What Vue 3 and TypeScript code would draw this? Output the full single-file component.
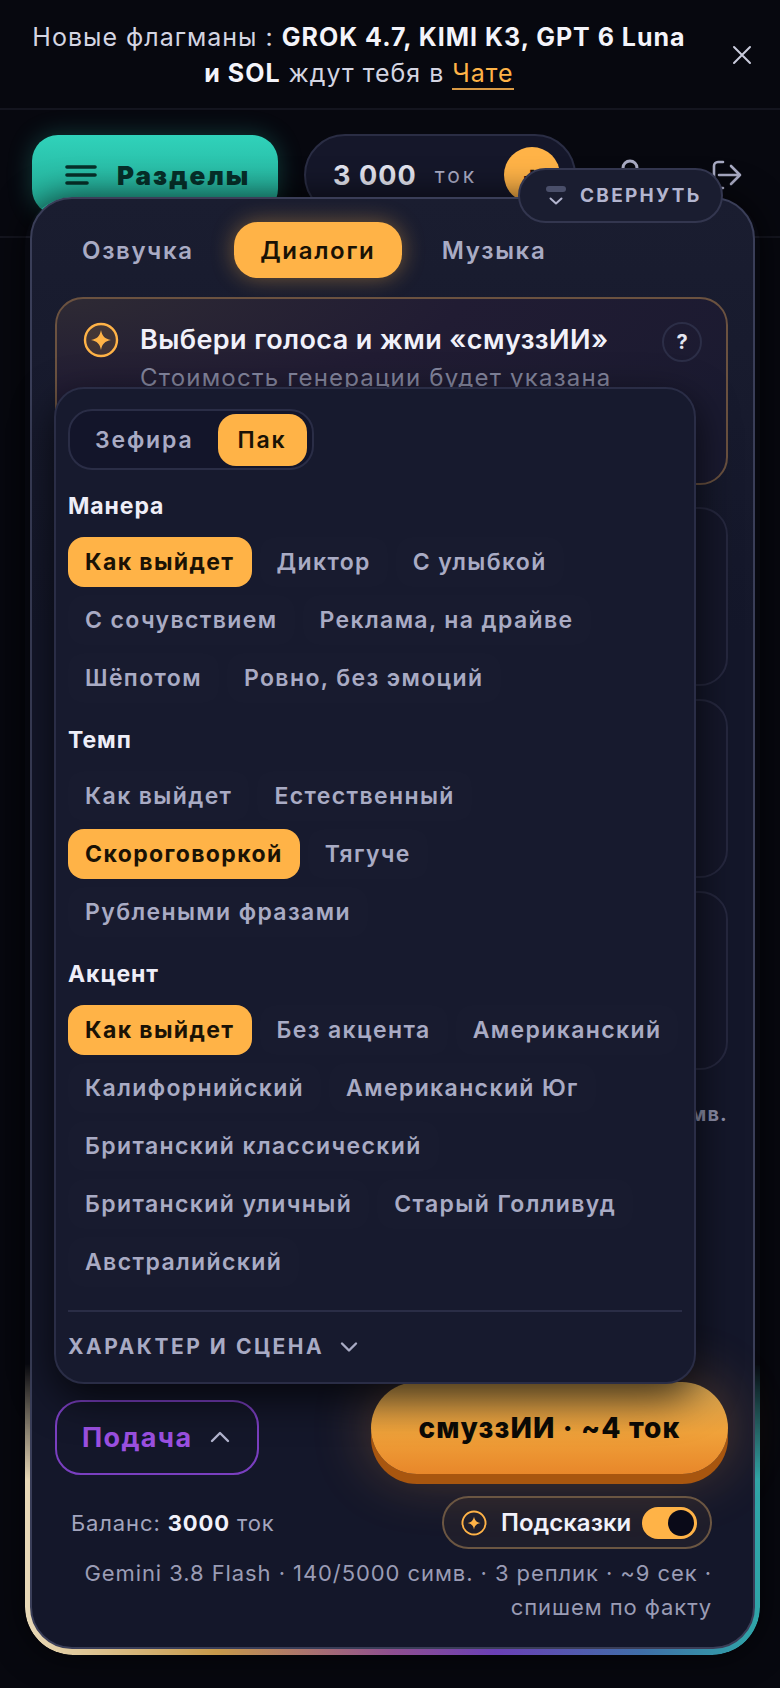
<script setup lang="ts">
import { ref } from 'vue'

interface ChipGroup {
  title: string
  rows: string[]
  active: string
}

const tabs = ['Озвучка', 'Диалоги', 'Музыка']
const activeTab = ref('Диалоги')
const voiceMode = ref('Пак')

const groups: ChipGroup[] = [
  {
    title: 'Манера',
    rows: ['Как выйдет', 'Диктор', 'С улыбкой', 'С сочувствием', 'Реклама, на драйве', 'Шёпотом', 'Ровно, без эмоций'],
    active: 'Как выйдет'
  },
  {
    title: 'Темп',
    rows: ['Как выйдет', 'Естественный', 'Скороговоркой', 'Тягуче', 'Рублеными фразами'],
    active: 'Скороговоркой'
  },
  {
    title: 'Акцент',
    rows: [
      'Как выйдет',
      'Без акцента',
      'Американский',
      'Калифорнийский',
      'Американский Юг',
      'Британский классический',
      'Британский уличный',
      'Старый Голливуд',
      'Австралийский'
    ],
    active: 'Как выйдет'
  }
]
</script>

<template>
  <div class="page">
    <div class="banner">
      <p>
        Новые флагманы : <b>GROK 4.7, KIMI K3, GPT 6 Luna</b><br />
        <b>и SOL</b> ждут тебя в <a>Чате</a>
      </p>
      <svg class="banner-close" width="20" height="20" viewBox="0 0 20 20" fill="none">
        <path d="M2 2l16 16M18 2L2 18" stroke="#c9cbdc" stroke-width="2" stroke-linecap="round" />
      </svg>
    </div>

    <header class="topbar">
      <button class="sections" type="button">
        <svg width="32" height="22" viewBox="0 0 32 22" fill="none">
          <path d="M2 3h28M2 11h28M2 19h20" stroke="#06302a" stroke-width="3.6" stroke-linecap="round" />
        </svg>
        <span>Разделы</span>
      </button>
      <div class="balance-pill">
        <strong>3 000</strong>
        <span>ток</span>
        <i class="plus">+</i>
      </div>
      <svg class="top-icon user" width="30" height="34" viewBox="0 0 30 34" fill="none">
        <circle cx="15" cy="10" r="7" stroke="#a9abc4" stroke-width="3" />
        <path d="M3 31c1-8 6-11 12-11s11 3 12 11" stroke="#a9abc4" stroke-width="3" stroke-linecap="round" />
      </svg>
      <svg class="top-icon" width="30" height="30" viewBox="0 0 30 30" fill="none">
        <path d="M11 2H6a4 4 0 0 0-4 4v18a4 4 0 0 0 4 4h5" stroke="#a9abc4" stroke-width="2.6" stroke-linecap="round" />
        <path d="M7 15h21M19 6l9 9-9 9" stroke="#a9abc4" stroke-width="2.6" stroke-linecap="round" stroke-linejoin="round" />
      </svg>
    </header>

    <section class="sheet">
      <div class="sheet-rim"></div>
      <div class="sheet-body">
        <button class="collapse" type="button">
          <span class="collapse-icon">
            <i></i>
            <svg width="14" height="8" viewBox="0 0 14 8" fill="none">
              <path d="M1.5 1.5L7 6.5l5.5-5" stroke="#b3b5cf" stroke-width="2" stroke-linecap="round" stroke-linejoin="round" />
            </svg>
          </span>
          СВЕРНУТЬ
        </button>

        <nav class="tabs">
          <button
            v-for="tab in tabs"
            :key="tab"
            type="button"
            :class="{ active: tab === activeTab }"
            @click="activeTab = tab"
          >
            {{ tab }}
          </button>
        </nav>

        <div class="hint-card">
          <svg class="hint-star" width="36" height="36" viewBox="0 0 36 36" fill="none">
            <circle cx="18" cy="18" r="16" fill="rgba(255,179,71,.12)" stroke="#ffb347" stroke-width="2.4" />
            <path d="M18 8c1 6 4 9 10 10-6 1-9 4-10 10-1-6-4-9-10-10 6-1 9-4 10-10z" fill="#ffb347" />
          </svg>
          <div class="hint-text">
            <h2>Выбери голоса и жми «смуззИИ»</h2>
            <p>Стоимость генерации будет указана</p>
          </div>
          <span class="hint-help">?</span>
        </div>

        <div class="replica-card"></div>
        <div class="replica-card"></div>
        <div class="replica-card"></div>
        <div class="counter">140/5000 симв.</div>

        <div class="delivery-menu">
          <div class="voice-switch">
            <button
              v-for="mode in ['Зефира', 'Пак']"
              :key="mode"
              type="button"
              :class="{ active: mode === voiceMode }"
              @click="voiceMode = mode"
            >
              {{ mode }}
            </button>
          </div>

          <div v-for="group in groups" :key="group.title" class="group">
            <h3>{{ group.title }}</h3>
            <div class="chips">
              <span
                v-for="chip in group.rows"
                :key="chip"
                class="chip"
                :class="{ active: chip === group.active }"
              >
                {{ chip }}
              </span>
            </div>
          </div>

          <div class="scene-toggle">
            <span>ХАРАКТЕР И СЦЕНА</span>
            <svg width="18" height="12" viewBox="0 0 18 12" fill="none">
              <path d="M2 2.5l7 7 7-7" stroke="#a9abc4" stroke-width="2.4" stroke-linecap="round" stroke-linejoin="round" />
            </svg>
          </div>
        </div>

        <footer class="sheet-footer">
          <div class="actions">
            <button class="delivery" type="button">
              Подача
              <svg width="20" height="12" viewBox="0 0 20 12" fill="none">
                <path d="M2 10l8-8 8 8" stroke="#b3b5cf" stroke-width="2.4" stroke-linecap="round" stroke-linejoin="round" />
              </svg>
            </button>
            <button class="smoothie" type="button">смуззИИ · ~4 ток</button>
          </div>

          <div class="meta">
            <span class="funds">Баланс: <b>3000</b> ток</span>
            <div class="tips">
              <svg width="26" height="26" viewBox="0 0 36 36" fill="none">
                <circle cx="18" cy="18" r="16" stroke="#ffb347" stroke-width="2.6" />
                <path d="M18 9c1 5.500 3.500 8 9 9-5.500 1-8 3.500-9 9-1-5.500-3.500-8-9-9 5.500-1 8-3.500 9-9z" fill="#ffb347" />
              </svg>
              <span>Подсказки</span>
              <i class="toggle"></i>
            </div>
          </div>

          <p class="cost-note">
            Gemini 3.8 Flash · 140/5000 симв. · 3 реплик · ~9 сек ·<br />
            спишем по факту
          </p>
        </footer>
      </div>
    </section>
  </div>
</template>

<style>
html,
body {
  margin: 0;
  background: #07080f;
}
</style>

<style scoped>
.page {
  position: relative;
  width: 780px;
  height: 1688px;
  overflow: hidden;
  background: #07080f;
  color: #fff;
  font-family: Inter, 'Noto Sans', sans-serif;
}

button {
  font-family: inherit;
  border: 0;
  background: none;
  padding: 0;
}

.banner {
  display: flex;
  align-items: center;
  height: 110px;
  padding: 2px 28px 0 30px;
  box-sizing: border-box;
  border-bottom: 2px solid #14151f;
}

.banner p {
  flex: 1;
  margin: 0 44px 0 0;
  text-align: center;
  white-space: nowrap;
  font-size: 25px;
  line-height: 36px;
  letter-spacing: 0.04em;
  color: #d4d5e2;
}

.banner b {
  color: #f4f4fa;
  font-weight: 700;
}

.banner a {
  color: #ffb347;
  border-bottom: 2px solid #d99a45;
}

.banner-close {
  flex: none;
}

.topbar {
  display: flex;
  align-items: center;
  height: 128px;
  padding: 4px 24px 0 32px;
  box-sizing: border-box;
  border-bottom: 2px solid #14151f;
}

.sections {
  display: flex;
  align-items: center;
  gap: 20px;
  width: 246px;
  height: 80px;
  padding-left: 33px;
  box-sizing: border-box;
  border-radius: 26px;
  background: linear-gradient(180deg, #30d2ba, #22a892);
  box-shadow: 0 0 24px rgba(48, 210, 186, 0.25);
}

.sections span {
  font-size: 26px;
  font-weight: 900;
  letter-spacing: 0.08em;
  color: #06302a;
}

.balance-pill {
  display: flex;
  align-items: center;
  width: 272px;
  height: 82px;
  margin-left: 26px;
  padding: 0 14px 0 27px;
  box-sizing: border-box;
  border: 2px solid #2a2d44;
  border-radius: 41px;
  background: #15172a;
}

.balance-pill strong {
  font-size: 27px;
  font-weight: 700;
  letter-spacing: 0.04em;
  color: #e4e5f0;
}

.balance-pill span {
  margin-left: 18px;
  font-size: 21px;
  letter-spacing: 0.14em;
  color: #a9abc4;
}

.plus {
  display: flex;
  align-items: center;
  justify-content: center;
  width: 56px;
  height: 56px;
  margin-left: auto;
  border-radius: 50%;
  background: #ffb347;
  color: #1a1205;
  font-style: normal;
  font-size: 32px;
  font-weight: 700;
}

.top-icon {
  flex: none;
}

.top-icon.user {
  margin-left: 39px;
  margin-right: 67px;
}

.sheet {
  position: absolute;
  left: 25px;
  top: 197px;
  width: 735px;
  height: 1458px;
  border-radius: 48px;
  box-shadow: 0 0 34px rgba(0, 0, 0, 0.7);
}

.sheet-rim {
  position: absolute;
  inset: 0;
  border-radius: 48px;
  background: linear-gradient(90deg, #e8d9b8 0%, #c79a4a 26%, #8f4f90 50%, #6a3fb5 64%, #3f6fa8 84%, #2fa6a8 100%);
  -webkit-mask-image: linear-gradient(180deg, transparent 80%, #000 88%);
  mask-image: linear-gradient(180deg, transparent 80%, #000 88%);
}

.sheet-body {
  position: absolute;
  left: 5px;
  right: 5px;
  top: 0;
  bottom: 6px;
  display: flex;
  flex-direction: column;
  padding: 23px 25px 23px 23px;
  box-sizing: border-box;
  border: 2px solid #3a3e58;
  border-radius: 42px;
  background: linear-gradient(180deg, #1a1d30, #14172a 30%, #14172a);
}

.collapse {
  position: absolute;
  left: 486px;
  top: -31px;
  z-index: 3;
  display: flex;
  align-items: center;
  gap: 14px;
  width: 205px;
  height: 55px;
  padding-left: 26px;
  box-sizing: border-box;
  border: 2px solid #33364f;
  border-radius: 28px;
  background: #1a1d30;
  color: #b3b5cf;
  font-size: 19px;
  font-weight: 700;
  letter-spacing: 0.12em;
}

.collapse-icon {
  display: flex;
  flex-direction: column;
  align-items: center;
  gap: 5px;
}

.collapse-icon i {
  display: block;
  width: 20px;
  height: 6px;
  border-radius: 3px;
  background: #4a4f6a;
}

.tabs {
  display: flex;
  align-items: center;
  gap: 40px;
  height: 56px;
  padding-left: 27px;
}

.tabs button {
  height: 56px;
  font-size: 24px;
  font-weight: 600;
  letter-spacing: 0.07em;
  color: #a9abc4;
}

.tabs button.active {
  width: 168px;
  border-radius: 24px;
  background: #ffb347;
  color: #1a1205;
  box-shadow: 0 0 22px rgba(255, 179, 71, 0.4);
}

.hint-card {
  display: flex;
  align-items: flex-start;
  height: 188px;
  margin-top: 19px;
  margin-bottom: 9px;
  padding: 23px 24px 0 26px;
  box-sizing: border-box;
  border: 2px solid #6b5240;
  border-radius: 28px;
  background: radial-gradient(120% 100% at 0% 0%, #2e2a34, #211c33 50%, #1a1a30);
}

.hint-star {
  flex: none;
}

.hint-text {
  flex: 1;
  margin-left: 21px;
}

.hint-text h2 {
  margin: 0;
  font-size: 27px;
  font-weight: 600;
  line-height: 36px;
  letter-spacing: 0.015em;
  color: #f1f1fa;
}

.hint-text p {
  margin: 2px 0 0;
  font-size: 24px;
  line-height: 36px;
  letter-spacing: 0.05em;
  white-space: nowrap;
  color: #84869e;
}

.hint-help {
  flex: none;
  display: flex;
  align-items: center;
  justify-content: center;
  width: 40px;
  height: 40px;
  box-sizing: border-box;
  border: 2px solid #2c2e47;
  border-radius: 50%;
  font-size: 20px;
  font-weight: 700;
  color: #e4e5f0;
}

.replica-card {
  height: 179px;
  margin-top: 13px;
  box-sizing: border-box;
  border: 2px solid #26283f;
  border-radius: 28px;
  background: #15172a;
}

.counter {
  margin-top: 32px;
  text-align: right;
  font-size: 20px;
  font-weight: 700;
  letter-spacing: 0.06em;
  color: #8f91ab;
}

.delivery-menu {
  position: absolute;
  left: 22px;
  top: 188px;
  z-index: 2;
  width: 642px;
  height: 997px;
  padding: 20px 12px 0;
  box-sizing: border-box;
  border: 2px solid #2a2d46;
  border-radius: 30px;
  background: #171a2e;
  box-shadow: 0 14px 40px rgba(0, 0, 0, 0.7);
}

.voice-switch {
  display: inline-flex;
  align-items: center;
  gap: 4px;
  height: 61px;
  padding: 0 5px;
  box-sizing: border-box;
  border: 2px solid #2a2d46;
  border-radius: 24px;
  background: #13152a;
}

.voice-switch button {
  height: 52px;
  padding: 0 20px;
  border-radius: 18px;
  font-size: 23px;
  font-weight: 600;
  letter-spacing: 0.08em;
  color: #a9abc4;
}

.voice-switch button.active {
  background: #ffb347;
  color: #1a1205;
}

.group {
  margin-top: 21px;
}

.voice-switch + .group {
  margin-top: 20px;
}

.group h3 {
  margin: 0 0 15px;
  font-size: 23px;
  font-weight: 700;
  line-height: 32px;
  letter-spacing: 0.04em;
  color: #eeeef8;
}

.chips {
  display: flex;
  flex-wrap: wrap;
  gap: 8px;
  margin-right: -6px;
}

.chip {
  display: flex;
  align-items: center;
  height: 50px;
  padding: 0 17px;
  border-radius: 16px;
  background: rgba(255, 255, 255, 0.008);
  font-size: 23px;
  font-weight: 600;
  letter-spacing: 0.06em;
  color: #a9abc4;
}

.chip.active {
  background: #ffb347;
  color: #1a1205;
  font-weight: 700;
}

.scene-toggle {
  display: flex;
  align-items: center;
  gap: 16px;
  margin-top: 23px;
  padding-top: 22px;
  border-top: 2px solid #2a2d46;
  font-size: 21px;
  font-weight: 700;
  letter-spacing: 0.12em;
  color: #a9abc4;
}

.sheet-footer {
  margin-top: auto;
}

.actions {
  display: flex;
  align-items: center;
  justify-content: space-between;
}

.delivery {
  display: flex;
  align-items: center;
  gap: 18px;
  width: 204px;
  height: 75px;
  margin-top: 8px;
  padding-left: 25px;
  box-sizing: border-box;
  border: 2px solid #7a3fc0;
  border-radius: 26px;
  font-size: 27px;
  font-weight: 700;
  letter-spacing: 0.05em;
  color: #9b50e0;
}

.smoothie {
  width: 357px;
  height: 92px;
  margin-bottom: 10px;
  border-radius: 46px;
  background: linear-gradient(180deg, #cfa050, #f0a23a 55%, #e8872a);
  box-shadow:
    0 10px 0 #a8560f,
    0 0 60px rgba(255, 160, 60, 0.3);
  font-size: 28px;
  font-weight: 800;
  letter-spacing: 0.04em;
  color: #0c0a06;
}

.meta {
  display: flex;
  align-items: center;
  justify-content: space-between;
  margin-top: 12px;
  padding: 0 16px;
}

.funds {
  font-size: 22px;
  letter-spacing: 0.04em;
  color: #a3a5be;
}

.funds b {
  color: #f1f1fa;
  font-weight: 700;
}

.tips {
  display: flex;
  align-items: center;
  width: 270px;
  height: 53px;
  padding: 0 13px 0 17px;
  box-sizing: border-box;
  border: 2px solid #6b5642;
  border-radius: 27px;
  background: rgba(255, 179, 71, 0.05);
}

.tips span {
  margin-left: 14px;
  font-size: 24px;
  font-weight: 600;
  color: #f1f1fa;
}

.toggle {
  position: relative;
  width: 55px;
  height: 32px;
  margin-left: auto;
  border-radius: 16px;
  background: #ffb347;
}

.toggle::after {
  content: '';
  position: absolute;
  right: 3px;
  top: 3px;
  width: 26px;
  height: 26px;
  border-radius: 50%;
  background: #0a0a18;
}

.cost-note {
  margin: 7px 16px 0 0;
  text-align: right;
  font-size: 22px;
  line-height: 34px;
  letter-spacing: 0.042em;
  white-space: nowrap;
  color: #9a9cb5;
}
</style>
